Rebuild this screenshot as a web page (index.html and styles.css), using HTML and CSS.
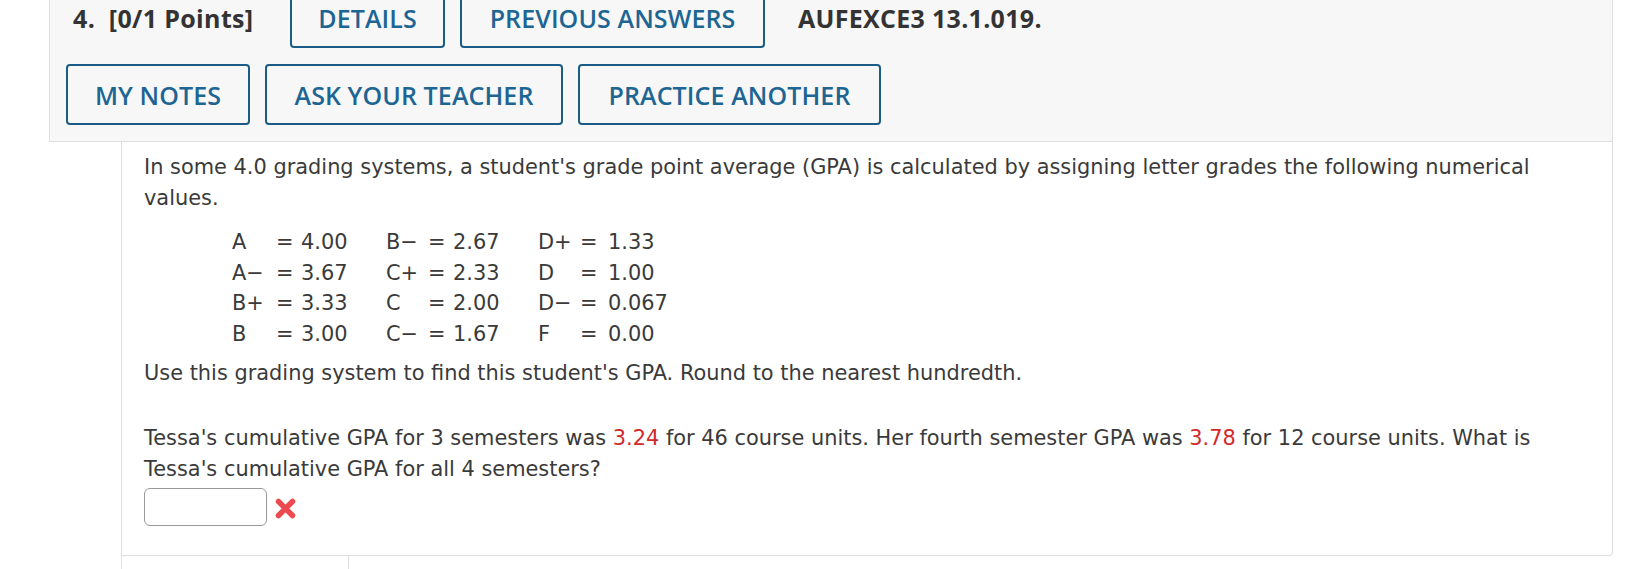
FILE: index.html
```html
<!DOCTYPE html>
<html>
<head>
<meta charset="utf-8">
<link rel="stylesheet" href="styles.css">
</head>
<body>
<div class="page">
  <div class="header">
    <div class="row row-top">
      <span class="qnum">4.&nbsp; [0/1 Points]</span>
      <div class="btns">
        <span class="btn btn-details">DETAILS</span>
        <span class="btn btn-prev">PREVIOUS ANSWERS</span>
      </div>
      <span class="qid">AUFEXCE3 13.1.019.</span>
    </div>
    <div class="row row-bottom">
      <span class="btn btn-notes">MY NOTES</span>
      <span class="btn btn-ask">ASK YOUR TEACHER</span>
      <span class="btn btn-practice">PRACTICE ANOTHER</span>
    </div>
  </div>
  <div class="content">
    <p class="intro">In some 4.0 grading systems, a student's grade point average (GPA) is calculated by assigning letter grades the following numerical<br>values.</p>
    <div class="grades">
      <span>A</span><span>=</span><span>4.00</span>
      <span>B&minus;</span><span>=</span><span>2.67</span>
      <span>D+</span><span>=</span><span>1.33</span>
      <span>A&minus;</span><span>=</span><span>3.67</span>
      <span>C+</span><span>=</span><span>2.33</span>
      <span>D</span><span>=</span><span>1.00</span>
      <span>B+</span><span>=</span><span>3.33</span>
      <span>C</span><span>=</span><span>2.00</span>
      <span>D&minus;</span><span>=</span><span>0.067</span>
      <span>B</span><span>=</span><span>3.00</span>
      <span>C&minus;</span><span>=</span><span>1.67</span>
      <span>F</span><span>=</span><span>0.00</span>
    </div>
    <p class="instr">Use this grading system to find this student's GPA. Round to the nearest hundredth.</p>
    <p class="problem">Tessa's cumulative GPA for 3 semesters was <span class="red">3.24</span> for 46 course units. Her fourth semester GPA was <span class="red">3.78</span> for 12 course units. What is<br>Tessa's cumulative GPA for all 4 semesters?</p>
    <div class="answer">
      <span class="input"></span>
      <svg class="xmark" width="25" height="25" viewBox="0 0 25 25">
        <path d="M5.5 5.5 L19.5 19.5 M19.5 5.5 L5.5 19.5" stroke="#ec4a4e" stroke-width="5.5" stroke-linecap="round" fill="none"/>
      </svg>
    </div>
  </div>
  <div class="below">
    <div class="below-box"></div>
  </div>
</div>
</body>
</html>
```

FILE: styles.css
```css
html, body {
  margin: 0;
  padding: 0;
  background: #ffffff;
  overflow: hidden;
}
.page {
  width: 1640px;
  height: 569px;
  overflow: hidden;
}
.header {
  margin: -30px 27px 0 49px;
  padding: 16px 0 16px 16px;
  background: #f7f7f7;
  border: 1px solid #e0e0e0;
  font-family: "Open Sans", "Liberation Sans", sans-serif;
  display: flex;
  flex-direction: column;
  gap: 16px;
}
.row {
  display: flex;
  align-items: center;
}
.row-top {
  padding-left: 7px;
}
.qnum {
  font-size: 25px;
  font-weight: 700;
  color: #333333;
  letter-spacing: 0.35px;
  width: 217px;
  white-space: nowrap;
}
.btns {
  display: flex;
  gap: 15px;
}
.qid {
  margin-left: 33px;
  font-size: 25px;
  font-weight: 700;
  color: #333333;
  letter-spacing: 0.3px;
  white-space: nowrap;
}
.row-bottom {
  gap: 15px;
}
.btn {
  box-sizing: border-box;
  height: 61px;
  display: flex;
  align-items: center;
  justify-content: center;
  padding: 0;
  border: 2px solid #1b5c86;
  border-radius: 4px;
  color: #1d6593;
  font-size: 25px;
  font-weight: 600;
  letter-spacing: 0.1px;
  white-space: nowrap;
}
.btn-details { width: 155px; }
.btn-prev { width: 305px; }
.btn-notes { width: 184px; }
.btn-ask { width: 298px; }
.btn-practice { width: 303px; }
.content {
  margin: 0 27px 0 121px;
  height: 414px;
  box-sizing: border-box;
  border: 1px solid #dddddd;
  border-top: none;
  border-radius: 0 0 4px 0;
  padding: 10px 10px 0 22px;
  font-family: "DejaVu Sans", Verdana, sans-serif;
  font-size: 20.9px;
  line-height: 31px;
  color: #3a3a3a;
}
.content p {
  margin: 0;
  white-space: nowrap;
}
.grades {
  display: grid;
  grid-template-columns: 44px 25px 85px 42px 25px 85px 42px 28px 80px;
  margin: 13px 0 0 88px;
  line-height: 30.5px;
}
.instr {
  margin-top: 9px !important;
}
.problem {
  margin-top: 34px !important;
}
.red {
  color: #d12a2a;
}
.answer {
  display: flex;
  align-items: center;
  margin-top: 3px;
  gap: 6px;
}
.input {
  display: block;
  width: 123px;
  height: 38px;
  box-sizing: border-box;
  border: 1px solid #999999;
  border-radius: 6px;
  background: #ffffff;
}
.xmark {
  display: block;
  margin-top: 3px;
}
.below {
  margin-left: 121px;
  height: 30px;
  border-left: 1px solid #e4e4e4;
}
.below-box {
  margin-left: 226px;
  height: 30px;
  border-left: 1px solid #dddddd;
}
```
